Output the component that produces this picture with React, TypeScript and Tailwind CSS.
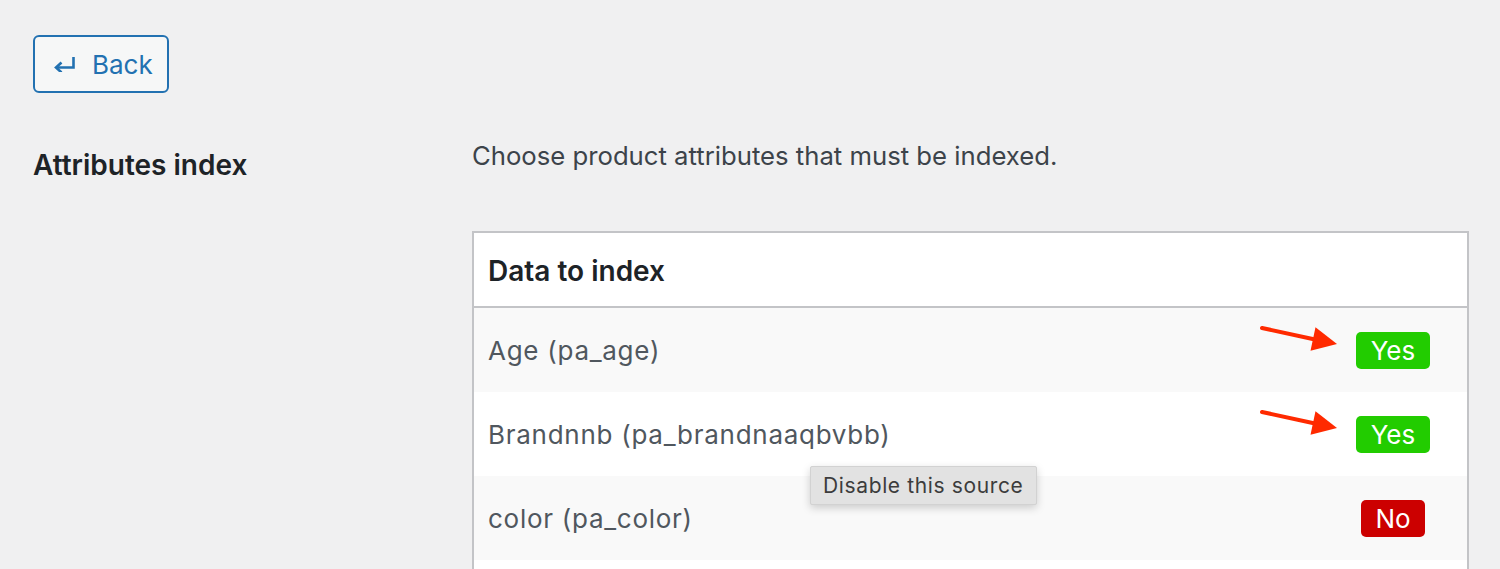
import React from 'react';

type Source = { label: string; enabled: boolean; marked?: boolean };

const sources: Source[] = [
  { label: 'Age (pa_age)', enabled: true, marked: true },
  { label: 'Brandnnb (pa_brandnaaqbvbb)', enabled: true, marked: true },
  { label: 'color (pa_color)', enabled: false },
];

const ReturnIcon: React.FC = () => (
  <svg width="22" height="16" viewBox="0 0 22 16" fill="none" className="shrink-0">
    <path d="M19.5 1v10.5H3" stroke="#2271b1" strokeWidth="2.6" />
    <path d="M7.5 6.5 2 11.5l5.5 5" stroke="#2271b1" strokeWidth="2.6" fill="none" />
  </svg>
);

const Arrow: React.FC = () => (
  <svg width="80" height="30" viewBox="0 0 80 30" className="absolute right-[127px] top-[16px]">
    <line x1="2" y1="4" x2="55" y2="15.5" stroke="#ff2a00" strokeWidth="4" strokeLinecap="round" />
    <polygon points="55.5,3.3 77,20 50.5,26.7" fill="#ff2a00" />
  </svg>
);

const App: React.FC = () => {
  return (
    <div className="min-h-screen bg-[#f0f0f1] pl-[33px] pr-[31px] pt-[35px] font-['Inter',sans-serif]">
      <button className="flex h-[58px] w-[136px] items-center gap-[16px] rounded-[6px] border-2 border-[#2271b1] bg-[#f6f7f7] pl-[19px] text-[26px] text-[#2271b1]">
        <ReturnIcon />
        <span>Back</span>
      </button>

      <div className="mt-[45px] flex items-start">
        <div className="w-[439px] shrink-0 pt-[9px]">
          <h2 className="text-[28px] font-semibold leading-[36px] text-[#1d2327]">Attributes index</h2>
        </div>

        <div className="flex-1">
          <p className="text-[25.7px] leading-[36px] text-[#3c434a]">Choose product attributes that must be indexed.</p>

          <div className="relative mt-[57px] border-x-2 border-t-2 border-[#c3c4c7] bg-white">
            <div className="flex h-[75px] items-center border-b-2 border-[#c3c4c7] px-[14px] pt-[2px]">
              <span className="text-[28px] font-semibold text-[#1d2327]">Data to index</span>
            </div>

            {sources.map((s, i) => (
              <div
                key={s.label}
                className={`relative flex h-[84px] items-center pl-[14px] ${i % 2 === 0 ? 'bg-[#f9f9f9]' : 'bg-white'}`}
              >
                <span className="flex-1 text-[26px] tracking-[0.028em] text-[#50575e]">{s.label}</span>
                {s.marked && <Arrow />}
                <div className="flex w-[148px] justify-center">
                  {s.enabled ? (
                    <span className="h-[37px] rounded-[5px] bg-[#22cc00] px-[15px] text-[26px] leading-[37px] text-white">Yes</span>
                  ) : (
                    <span className="h-[37px] rounded-[5px] bg-[#cc0000] px-[14px] text-[26px] leading-[37px] text-white">No</span>
                  )}
                </div>
              </div>
            ))}

            <div className="h-[84px] bg-white" />

            <div className="absolute left-[336px] top-[233px] flex h-[39px] w-[227px] items-center rounded-[2px] border border-[#d2d2d2] bg-[#e2e2e2] pl-[12px] text-[21px] tracking-[0.03em] text-[#3c3c3c] shadow-[0_3px_8px_rgba(0,0,0,0.18)]">
              Disable this source
            </div>
          </div>
        </div>
      </div>
    </div>
  );
};

export default App;
